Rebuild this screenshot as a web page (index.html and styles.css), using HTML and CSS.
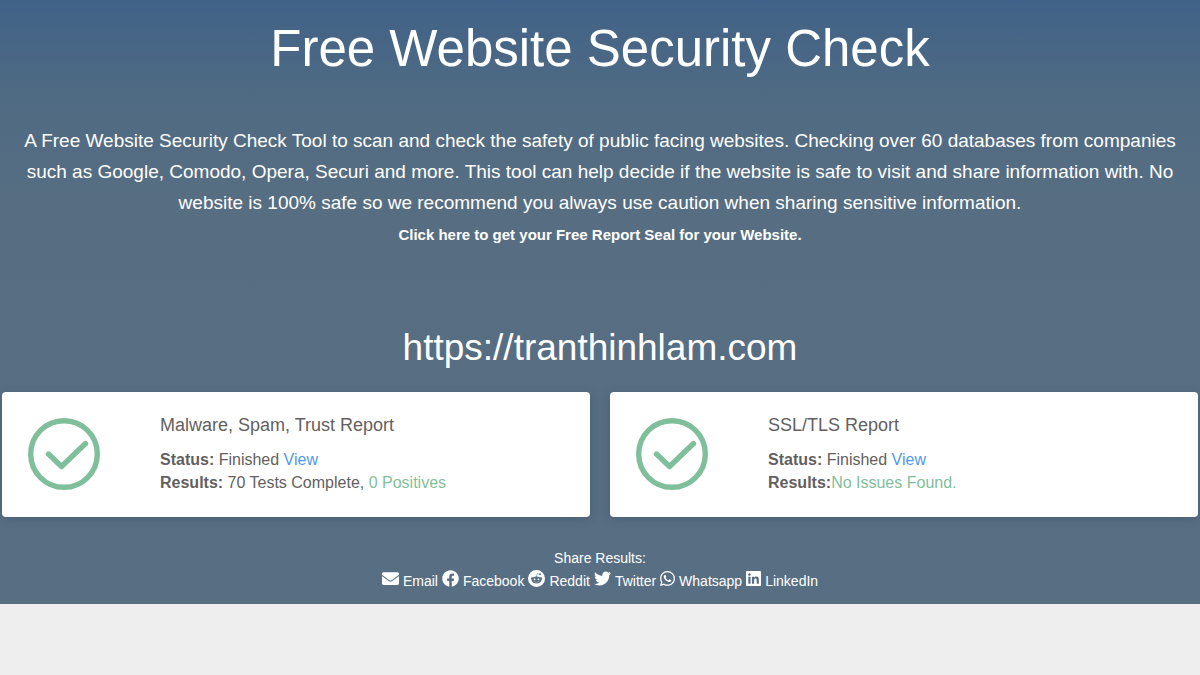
FILE: index.html
```html
<!DOCTYPE html>
<html lang="en">
<head>
<meta charset="utf-8">
<meta name="viewport" content="width=device-width, initial-scale=1">
<title>Free Website Security Check</title>
<link rel="stylesheet" href="styles.css">
</head>
<body>
<main class="hero">
  <h1 class="title">Free Website Security Check</h1>
  <p class="intro">A Free Website Security Check Tool to scan and check the safety of public facing websites. Checking over 60 databases from companies such as Google, Comodo, Opera, Securi and more. This tool can help decide if the website is safe to visit and share information with. No website is 100% safe so we recommend you always use caution when sharing sensitive information.</p>
  <a class="seal" href="#">Click here to get your Free Report Seal for your Website.</a>
  <h2 class="site">https://tranthinhlam.com</h2>
  <div class="cards">
    <section class="card">
      <svg class="check" viewBox="0 0 72 72" aria-hidden="true"><circle cx="36" cy="36" r="33.3"/><path d="M20.5 36 33.500 48.500 57.500 25.500"/></svg>
      <div class="report">
        <h3 class="report-title">Malware, Spam, Trust Report</h3>
        <p class="line"><strong>Status:</strong> Finished <a class="view" href="#">View</a></p>
        <p class="line"><strong>Results:</strong> 70 Tests Complete, <span class="good">0 Positives</span></p>
      </div>
    </section>
    <section class="card">
      <svg class="check" viewBox="0 0 72 72" aria-hidden="true"><circle cx="36" cy="36" r="33.3"/><path d="M20.5 36 33.500 48.500 57.500 25.500"/></svg>
      <div class="report">
        <h3 class="report-title">SSL/TLS Report</h3>
        <p class="line"><strong>Status:</strong> Finished <a class="view" href="#">View</a></p>
        <p class="line"><strong>Results:</strong><span class="good">No Issues Found.</span></p>
      </div>
    </section>
  </div>
  <div class="share">
    <p class="share-label">Share Results:</p>
    <nav class="links" aria-label="Share results">
      <a class="link" href="#"><svg class="icon" viewBox="0 0 512 512" aria-hidden="true"><path d="M502.300 190.800c3.900-3.100 9.700-.2 9.700 4.700V400c0 26.500-21.500 48-48 48H48c-26.500 0-48-21.500-48-48V195.600c0-5 5.700-7.800 9.700-4.700 22.400 17.400 52.100 39.500 154.100 113.600 21.100 15.400 56.700 47.800 92.200 47.600 35.700.3 72-32.800 92.300-47.600 102-74.100 131.600-96.300 154-113.700zM256 320c23.200.4 56.600-29.200 73.400-41.400 132.700-96.300 142.800-104.700 173.400-128.700 5.800-4.500 9.200-11.500 9.200-18.900v-19c0-26.500-21.500-48-48-48H48c-26.500 0-48 21.500-48 48v19c0 7.400 3.400 14.300 9.200 18.900 30.600 23.900 40.700 32.400 173.400 128.700 16.800 12.200 50.200 41.800 73.400 41.400z"/></svg>Email</a>
      <a class="link" href="#"><svg class="icon" viewBox="0 0 512 512" aria-hidden="true"><path d="M504 256C504 119 393 8 256 8S8 119 8 256c0 123.780 90.690 226.380 209.250 245V327.690h-63V256h63v-54.640c0-62.150 37-96.480 93.670-96.480 27.140 0 55.520 4.840 55.520 4.840v61h-31.280c-30.800 0-40.410 19.120-40.410 38.730V256h68.780l-11 71.690h-57.780V501C413.310 482.380 504 379.780 504 256z"/></svg>Facebook</a>
      <a class="link" href="#"><svg class="icon" viewBox="0 0 16 16" aria-hidden="true"><path d="M6.167 8a.831.831 0 0 0-.830.830c0 .459.372.840.830.831a.831.831 0 0 0 0-1.661m1.843 3.647c.315 0 1.403-.038 1.976-.611a.232.232 0 0 0 0-.306.213.213 0 0 0-.306 0c-.353.363-1.126.487-1.670.487-.545 0-1.308-.124-1.671-.487a.213.213 0 0 0-.306 0 .213.213 0 0 0 0 .306c.564.563 1.652.611 1.977.611zm.992-2.807c0 .458.373.830.831.830s.830-.381.830-.830a.831.831 0 0 0-1.660 0z"/><path d="M16 8A8 8 0 1 1 0 8a8 8 0 0 1 16 0m-3.828-1.165c-.315 0-.602.124-.812.325-.801-.573-1.900-.945-3.121-.993l.534-2.501 1.738.372a.830.830 0 1 0 .830-.869.830.830 0 0 0-.744.468l-1.938-.410a.200.200 0 0 0-.153.028.200.200 0 0 0-.086.134l-.592 2.788c-1.240.038-2.358.410-3.170.992-.210-.200-.496-.324-.810-.324a1.163 1.163 0 0 0-.478 2.224q-.020.170-.020.353c0 1.795 2.090 3.256 4.669 3.256s4.668-1.451 4.668-3.256c0-.114-.010-.238-.029-.353.401-.181.688-.592.688-1.069 0-.650-.525-1.165-1.174-1.165"/></svg>Reddit</a>
      <a class="link" href="#"><svg class="icon" viewBox="0 0 512 512" aria-hidden="true"><path d="M459.370 151.716c.325 4.548.325 9.097.325 13.645 0 138.720-105.583 298.558-298.558 298.558-59.452 0-114.680-17.219-161.137-47.106 8.447.974 16.568 1.299 25.340 1.299 49.055 0 94.213-16.568 130.274-44.832-46.132-.975-84.792-31.188-98.112-72.772 6.498.974 12.995 1.624 19.818 1.624 9.421 0 18.843-1.300 27.614-3.573-48.081-9.747-84.143-51.980-84.143-102.985v-1.299c13.969 7.797 30.214 12.670 47.431 13.319-28.264-18.843-46.781-51.005-46.781-87.391 0-19.492 5.197-37.360 14.294-52.954 51.655 63.675 129.300 105.258 216.365 109.807-1.624-7.797-2.599-15.918-2.599-24.040 0-57.828 46.782-104.934 104.934-104.934 30.213 0 57.502 12.670 76.670 33.137 23.715-4.548 46.456-13.320 66.599-25.340-7.798 24.366-24.366 44.833-46.132 57.827 21.117-2.273 41.584-8.122 60.426-16.243-14.292 20.791-32.161 39.308-52.628 54.253z"/></svg>Twitter</a>
      <a class="link" href="#"><svg class="icon icon-small" viewBox="0 0 16 16" aria-hidden="true"><path d="M13.601 2.326A7.850 7.850 0 0 0 7.994 0C3.627 0 .068 3.558.064 7.926c0 1.399.366 2.760 1.057 3.965L0 16l4.204-1.102a7.900 7.900 0 0 0 3.790.965h.004c4.368 0 7.926-3.558 7.930-7.930A7.900 7.900 0 0 0 13.600 2.326zM7.994 14.521a6.600 6.600 0 0 1-3.356-.920l-.240-.144-2.494.654.666-2.433-.156-.251a6.560 6.560 0 0 1-1.007-3.505c0-3.626 2.957-6.584 6.591-6.584a6.560 6.560 0 0 1 4.660 1.931 6.560 6.560 0 0 1 1.928 4.660c-.004 3.639-2.961 6.592-6.592 6.592m3.615-4.934c-.197-.099-1.170-.578-1.353-.646-.182-.065-.315-.099-.445.099-.133.197-.513.646-.627.775-.114.133-.232.148-.430.050-.197-.100-.836-.308-1.592-.985-.590-.525-.985-1.175-1.103-1.372-.114-.198-.011-.304.088-.403.087-.088.197-.232.296-.346.100-.114.133-.198.198-.330.065-.134.034-.248-.015-.347-.050-.099-.445-1.076-.612-1.470-.160-.389-.323-.335-.445-.340-.114-.007-.247-.007-.380-.007a.730.730 0 0 0-.529.247c-.182.198-.691.677-.691 1.654s.710 1.916.810 2.049c.098.133 1.394 2.132 3.383 2.992.470.205.840.326 1.129.418.475.152.904.129 1.246.080.380-.058 1.171-.480 1.338-.943.164-.464.164-.860.114-.943-.049-.084-.182-.133-.380-.232"/></svg>Whatsapp</a>
      <a class="link" href="#"><svg class="icon icon-small" viewBox="0 32 448 448" aria-hidden="true"><path d="M416 32H31.900C14.300 32 0 46.500 0 64.300v383.400C0 465.500 14.300 480 31.900 480H416c17.600 0 32-14.500 32-32.300V64.300c0-17.800-14.400-32.300-32-32.300zM135.400 416H69V202.200h66.500V416zm-33.200-243c-21.300 0-38.500-17.300-38.500-38.500S80.900 96 102.200 96c21.200 0 38.500 17.300 38.500 38.500 0 21.300-17.200 38.500-38.500 38.500zm282.100 243h-66.400V312c0-24.800-.5-56.700-34.500-56.700-34.600 0-39.900 27-39.900 54.900V416h-66.400V202.200h63.700v29.200h.9c8.900-16.800 30.600-34.500 62.900-34.500 67.200 0 79.700 44.300 79.700 101.900V416z"/></svg>LinkedIn</a>
    </nav>
  </div>
</main>
</body>
</html>
```
FILE: styles.css
```css
* { box-sizing: border-box; }
body {
  margin: 0;
  background: #eeeeee;
  font-family: "Liberation Sans", Arial, sans-serif;
  font-size: 16px;
}
h1, h2, h3, p { margin: 0; font-weight: 400; }
a { text-decoration: none; color: inherit; }
.hero {
  display: flex;
  flex-direction: column;
  padding: 19px 2px 11px;
  background: linear-gradient(#416288 0, #4e6a83 90px, #576e82 200px, #586f83 100%);
  color: #ffffff;
  text-align: center;
}
.title { font-size: 51px; line-height: 60px; }
.intro { padding: 0 8px; margin-top: 46px; font-size: 19px; line-height: 31px; }
.seal { align-self: center; font-size: 15px; font-weight: 700; line-height: 24px; margin-top: 5px; }
.site { margin-top: 77px; font-size: 37px; line-height: 48px; }
.cards {
  display: grid;
  grid-template-columns: 1fr 1fr;
  gap: 20px;
  margin-top: 20px;
}
.card {
  display: flex;
  align-items: flex-start;
  gap: 60px;
  padding: 21px 26px 23px;
  border-radius: 4px;
  background: #ffffff;
  box-shadow: 0 2px 8px rgba(40, 60, 80, 0.25);
  color: #635f5f;
  text-align: left;
}
.check {
  flex: none;
  width: 72px;
  height: 72px;
  margin-top: 5px;
  fill: none;
  stroke: #7fbf9b;
  stroke-width: 5.4;
  stroke-linecap: round;
  stroke-linejoin: round;
}
.report-title { margin-bottom: 11px; font-size: 18px; line-height: 24px; }
.line { line-height: 23px; }
.view { color: #4f98ea; }
.good { color: #7fbf9b; }
.share { margin-top: 30px; font-size: 14px; line-height: 23px; }
.links { display: flex; flex-wrap: wrap; justify-content: center; gap: 4px; }
.link { display: flex; gap: 4px; }
.icon { width: 17px; height: 17px; fill: #ffffff; }
.icon-small { width: 15px; height: 15px; margin-top: 1px; }
```
